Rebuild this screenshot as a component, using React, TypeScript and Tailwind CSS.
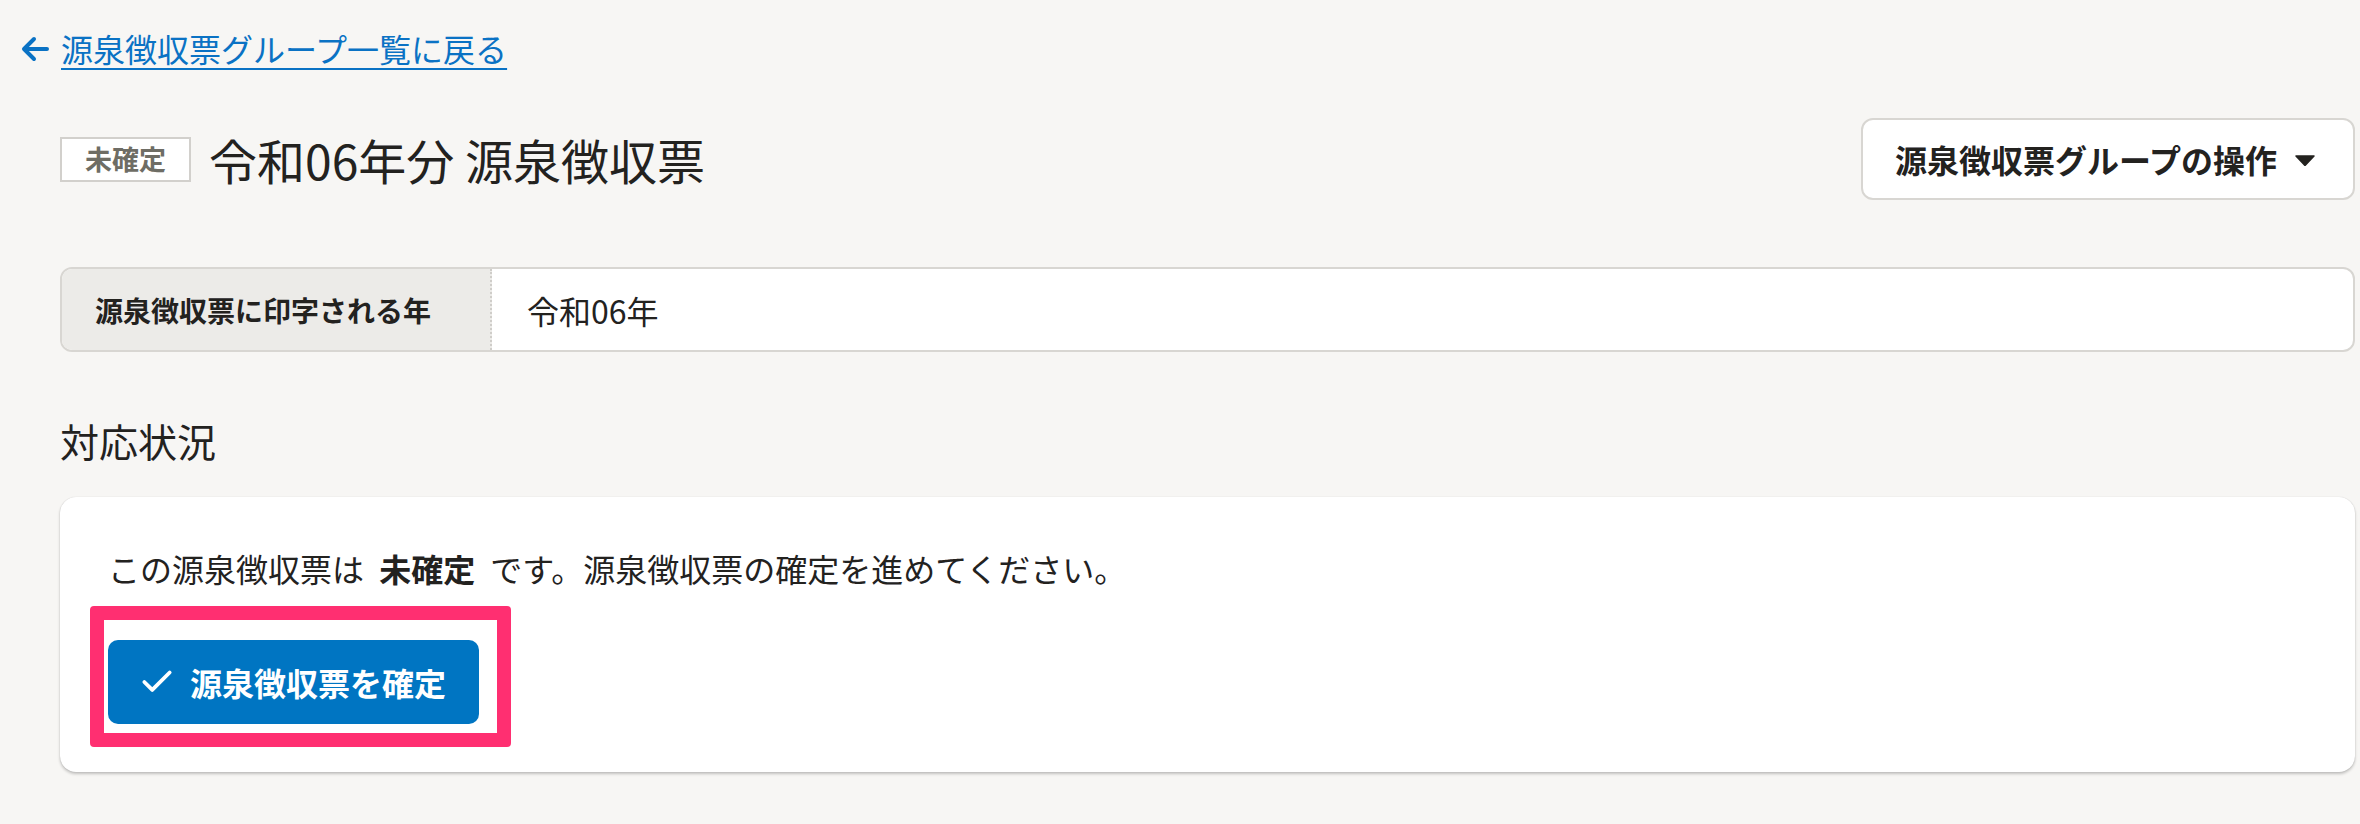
import { Check } from 'lucide-react'

const font = "font-['Noto_Sans_CJK_JP','Noto_Sans',sans-serif]"

function Badge({ label }: { label: string }) {
  return (
    <span className="inline-flex h-[45px] w-[131px] items-center justify-center border-2 border-[#d2d0cc] bg-white text-[27px] font-bold text-[#6e6d65]">
      {label}
    </span>
  )
}

function GroupMenuButton() {
  return (
    <button className="flex h-[82px] w-[494px] items-center justify-between rounded-[12px] border-2 border-[#d8d6d2] bg-white pl-[32px] pr-[38px] text-[32px] font-bold text-[#23221f]">
      <span>源泉徴収票グループの操作</span>
      <svg width="20" height="11" viewBox="0 0 20 11" className="mt-[2px]">
        <path d="M1 1h18l-9 9.5z" fill="#23221f" stroke="#23221f" strokeWidth="1.5" strokeLinejoin="round" />
      </svg>
    </button>
  )
}

export default function App() {
  return (
    <div className={`min-h-[824px] w-full bg-[#f7f6f4] pl-[21px] pr-[5px] text-[#23221f] ${font}`}>
      {/* back link */}
      <div className="pt-[25px]">
        <a
          href="#"
          className="inline-flex items-center gap-[12px] text-[32px] leading-[46px] text-[#0a72c4] underline decoration-2 underline-offset-[6px]"
        >
          <svg width="28" height="26" viewBox="0 0 28 26" className="mt-[2px]">
            <path d="M26 13H4M13 3 3 13l10 10" fill="none" stroke="#0a72c4" strokeWidth="4" strokeLinecap="round" strokeLinejoin="round" />
          </svg>
          <span>源泉徴収票グループ一覧に戻る</span>
        </a>
      </div>

      <div className="pl-[39px]">
        {/* heading row */}
        <div className="mt-[47px] flex h-[82px] items-center justify-between">
          <div className="flex items-center gap-[18px]">
            <Badge label="未確定" />
            <h1 className="text-[48px] font-normal leading-none">令和06年分 源泉徴収票</h1>
          </div>
          <GroupMenuButton />
        </div>

        {/* info table */}
        <div className="mt-[67px] flex h-[85px] overflow-hidden rounded-[12px] border-2 border-[#d8d6d2] bg-white">
          <div className="flex w-[430px] items-center border-r-2 border-dotted border-[#cfcdc9] bg-[#ecebe8] pl-[33px] text-[28px] font-bold">
            源泉徴収票に印字される年
          </div>
          <div className="flex flex-1 items-center pl-[35px] text-[32px]">令和06年</div>
        </div>

        {/* status */}
        <h2 className="mt-[60px] text-[39px] font-normal leading-[56px]">対応状況</h2>

        <div className="mt-[29px] rounded-[16px] bg-white p-[48px] shadow-[0_0_1px_rgba(0,0,0,0.18),0_2px_3px_rgba(0,0,0,0.22)]">
          <p className="text-[32px] leading-[46px]">
            この源泉徴収票は <strong className="mx-[8px] font-bold">未確定</strong> です。源泉徴収票の確定を進めてください。
          </p>
          <div className="relative mt-[49px] inline-block">
            <button className="flex h-[84px] w-[371px] items-center gap-[14px] rounded-[10px] bg-[#0075c2] pl-[30px] text-[32px] font-bold text-white">
              <Check size={38} strokeWidth={2.4} />
              <span>源泉徴収票を確定</span>
            </button>
            <div className="pointer-events-none absolute left-[-18px] top-[-34px] h-[141px] w-[421px] rounded-[4px] border-[14px] border-[#ff2f71]" />
          </div>
        </div>
      </div>
    </div>
  )
}
